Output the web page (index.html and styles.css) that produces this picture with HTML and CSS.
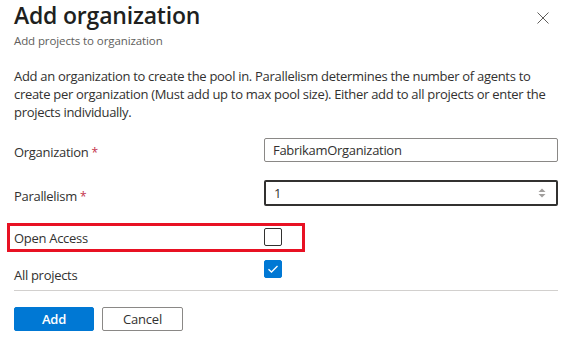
FILE: index.html
```html
<!DOCTYPE html>
<html lang="en">
<head>
<meta charset="utf-8">
<title>Add organization</title>
<link rel="stylesheet" href="styles.css">
</head>
<body>
<div class="panel">
  <header class="header">
    <div class="titles">
      <h1 class="title">Add organization</h1>
      <div class="subtitle">Add projects to organization</div>
    </div>
    <button class="close" aria-label="Close">
      <svg width="12" height="12" viewBox="0 0 12 12"><path d="M0.5 0.5 L11.5 11.5 M11.5 0.5 L0.5 11.5" stroke="#605e5c" stroke-width="1" fill="none"/></svg>
    </button>
  </header>
  <p class="desc">Add an organization to create the pool in. Parallelism determines the number of agents to create per organization (Must add up to max pool size). Either add to all projects or enter the projects individually.</p>
  <div class="form">
    <div class="row row-org">
      <label class="label label-org">Organization <span class="req">*</span></label>
      <div class="input">FabrikamOrganization</div>
    </div>
    <div class="row row-par">
      <label class="label label-par">Parallelism <span class="req">*</span></label>
      <div class="input input-focus">
        <span>1</span>
        <svg class="spin" width="8" height="10" viewBox="0 0 8 10"><path d="M4 0.5 L7.5 4 L0.5 4 Z" fill="#a19f9d"/><path d="M0.5 6 L7.5 6 L4 9.5 Z" fill="#a19f9d"/></svg>
      </div>
    </div>
    <div class="row row-open">
      <label class="label label-open">Open Access</label>
      <span class="check"></span>
    </div>
    <div class="row row-all">
      <label class="label label-low">All projects</label>
      <span class="check checked">
        <svg width="12" height="10" viewBox="0 0 12 10"><path d="M1.5 5.2 L4.5 8 L10.5 2" stroke="#fff" stroke-width="1.3" fill="none"/></svg>
      </span>
    </div>
    <div class="highlight"></div>
  </div>
  <div class="divider"></div>
  <div class="actions">
    <button class="btn btn-primary">Add</button>
    <button class="btn btn-default">Cancel</button>
  </div>
</div>
</body>
</html>
```

FILE: styles.css
```css
* { box-sizing: border-box; }
html, body { margin: 0; padding: 0; background: #fff; }
body {
  font-family: "Open Sans", "Noto Sans", sans-serif;
  color: #323130;
  width: 568px;
  height: 343px;
  overflow: hidden;
}
.panel { padding: 0 10px 0 14px; }
.header {
  display: flex;
  justify-content: space-between;
  align-items: flex-start;
}
.title {
  margin: 0;
  padding-top: 0;
  margin-top: -1px;
  font-size: 23px;
  font-weight: 600;
  line-height: 32px;
  letter-spacing: -0.2px;
  color: #201f1e;
}
.subtitle {
  font-size: 11.5px;
  line-height: 16px;
  color: #605e5c;
  margin-top: 2px;
  letter-spacing: -0.1px;
}
.close {
  border: 0;
  background: none;
  padding: 0;
  margin: 12px 9px 0 0;
  width: 12px;
  height: 12px;
  display: flex;
}
.desc {
  margin: 18px 0 0;
  font-size: 13px;
  line-height: 18px;
  letter-spacing: -0.3px;
  width: 544px;
}
.form {
  position: relative;
  margin-top: 17px;
  display: flex;
  flex-direction: column;
}
.row {
  display: grid;
  grid-template-columns: 250px 294px;
  align-items: center;
}
.row-org { height: 24px; }
.row-par { height: 26px; margin-top: 18px; }
.row-open { height: 18px; margin-top: 22px; }
.row-all { height: 18px; margin-top: 14px; }
.label {
  font-size: 13px;
  line-height: 18px;
  letter-spacing: -0.3px;
  position: relative;
}
.label-org { top: 2px; }
.label-par { top: 3px; }
.label-open { top: 1px; }
.label-low { top: 6px; }
.req { color: #c4314b; font-size: 12px; }
.input {
  height: 24px;
  border: 1px solid #8a8886;
  border-radius: 2px;
  font-size: 13px;
  letter-spacing: -0.3px;
  line-height: 20px;
  padding: 0 8px;
  display: flex;
  align-items: center;
  justify-content: space-between;
}
.input-focus {
  height: 26px;
  border: 2px solid #323130;
  padding: 0 10px 0 8px;
}
.spin { display: block; }
.check {
  width: 18px;
  height: 18px;
  border: 1px solid #323130;
  border-radius: 2px;
  display: flex;
  align-items: center;
  justify-content: center;
}
.check.checked {
  background: #0078d4;
  border-color: #0078d4;
}
.highlight {
  position: absolute;
  left: -7px;
  top: 85px;
  width: 298px;
  height: 29px;
  border: 3px solid #e81123;
  pointer-events: none;
}
.divider {
  margin-top: 12px;
  height: 1px;
  background: #d2d0ce;
  width: 544px;
}
.actions {
  display: flex;
  gap: 8px;
  margin-top: 16px;
}
.btn {
  height: 24px;
  border-radius: 2px;
  font-family: "Open Sans", "Noto Sans", sans-serif;
  font-size: 13px;
  font-weight: 600;
  padding: 0;
  line-height: 20px;
  letter-spacing: -0.2px;
}
.btn-primary {
  width: 80px;
  background: #0078d4;
  border: 1px solid #0078d4;
  color: #fff;
}
.btn-default {
  width: 81px;
  background: #fff;
  border: 1px solid #8a8886;
  color: #323130;
  font-weight: 400;
}
```
